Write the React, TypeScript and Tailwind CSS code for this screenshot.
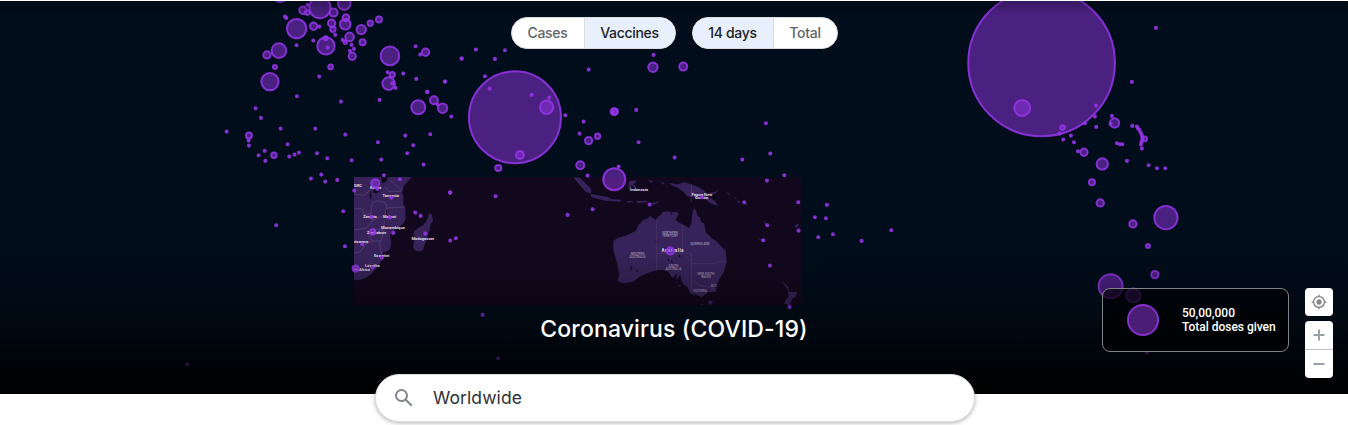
type Bubble = [x: number, y: number, r?: number];
type Region = { x: number; y: number; bubbles: Bubble[] };

// Bubble coordinates are stored per region in thirds of a pixel, relative to the region origin.
const UNIT = 3;

const regions: Region[] = [
  {
    x: 170,
    y: 0,
    bubbles: [
      [330, -20, 28], [398, 30, 14], [412, 14], [411, 37, 10], [449, 22, 35], [522, 10, 22], [490, 37, 15],
      [379, 85, 32], [344, 49], [348, 53], [430, 78, 14], [447, 79], [484, 69, 14], [488, 87, 11], [495, 104],
      [525, 72, 19], [527, 52, 13], [573, 88, 17], [600, 69, 11], [626, 58, 12], [538, 110, 16], [577, 126, 12],
      [525, 126, 8], [517, 119], [544, 134], [551, 146], [539, 152], [546, 168, 14], [467, 137, 29], [466, 114, 9],
      [472, 142], [429, 121], [379, 135], [326, 151, 25], [290, 164, 14], [314, 200, 9], [481, 200, 10], [447, 229],
      [299, 244, 29], [380, 288], [659, 167, 31], [766, 156, 14], [750, 163], [736, 138], [874, 175], [652, 216],
      [666, 223, 11], [699, 220], [655, 250, 22], [667, 249, 7], [676, 263], [738, 236], [824, 244], [771, 275],
    ],
  },
  {
    x: 210,
    y: 90,
    bubbles: [
      [136, 54], [152, 83], [49, 124], [211, 115], [315, 115], [392, 34], [508, 29], [405, 133], [116, 136, 12],
      [115, 151], [116, 166], [232, 162], [163, 182], [145, 195], [165, 212], [191, 195, 11], [237, 199], [253, 193],
      [266, 187], [320, 189], [351, 204], [424, 210], [503, 156], [513, 208], [585, 136], [660, 132], [609, 165],
      [591, 189], [640, 223], [333, 253], [302, 265], [345, 274], [381, 269], [521, 255], [569, 267], [624, 51, 24],
      [671, 30, 15], [697, 54, 17], [682, 43], [651, 5], [723, 79],
    ],
  },
  {
    x: 440,
    y: 40,
    bubbles: [
      [224, 231, 141], [107, 28], [64, 55], [164, 56], [194, 30], [134, 108], [148, 145], [274, 164], [327, 172],
      [319, 201, 23], [239, 344, 15], [174, 383, 12], [375, 225], [430, 244], [418, 280], [445, 88], [640, 44],
      [638, 81, 17], [729, 79, 15], [521, 214, 13], [524, 214, 12], [517, 215], [588, 209], [445, 301, 14],
      [472, 288, 11], [595, 306], [703, 352], [420, 375, 15], [442, 406], [535, 379], [522, 417, 36], [14, 124],
      [29, 457], [166, 468],
    ],
  },
  {
    x: 345,
    y: 170,
    bubbles: [
      [90, 39, 15], [96, 56], [27, 61], [138, 82], [78, 140], [134, 142], [82, 185, 11], [144, 188], [51, 222],
      [110, 262], [31, 295, 12], [82, 292], [210, 127], [226, 137], [240, 190], [315, 67], [315, 211], [332, 204],
      [-1, 228], [-6, 123], [-207, 165], [-474, 583], [412, 434], [459, 564],
    ],
  },
  {
    x: 560,
    y: 170,
    bubbles: [
      [22, 134], [97, 117], [268, 103], [425, 81], [330, 242, 14], [552, 96], [620, 31], [672, 15], [714, 96],
      [621, 165], [609, 210], [715, 181], [629, 286], [688, 410],
    ],
  },
  {
    x: 670,
    y: 100,
    bubbles: [
      [287, 69], [300, 160], [216, 178], [470, 314], [434, 351], [467, 354], [488, 402], [444, 411], [574, 422],
      [663, 390],
    ],
  },
  {
    x: 950,
    y: 0,
    bubbles: [
      [274, 188, 223], [216, 323, 27], [617, 83], [545, 245], [437, 316], [434, 349], [404, 369], [438, 380],
      [337, 382, 10], [328, 400], [339, 418], [362, 406], [371, 426], [485, 347], [493, 368, 17], [481, 371],
      [546, 377],
    ],
  },
  {
    x: 1030,
    y: 90,
    bubbles: [
      [320, 109], [323, 114], [327, 119], [331, 126], [334, 133], [336, 140], [336, 147], [334, 155], [332, 163],
      [343, 146, 10], [335, 175], [260, 159], [269, 162], [276, 162], [143, 183], [161, 186, 14], [216, 221, 20],
      [290, 212], [185, 276, 12], [210, 338, 14], [308, 401, 14], [355, 225], [380, 234], [405, 234], [407, 382, 38],
    ],
  },
  {
    x: 1080,
    y: 230,
    bubbles: [[203, 47, 9], [224, 133, 14], [91, 168, 39], [159, 196, 24], [200, 366]],
  },
];

const labels = [
  { x: 354, y: 186.5, text: "DRC" },
  { x: 370, y: 188.5, text: "Kenya" },
  { x: 382.5, y: 197, text: "Tanzania" },
  { x: 363, y: 217.5, text: "Zambia" },
  { x: 383, y: 217.5, text: "Malawi" },
  { x: 381, y: 228.5, text: "Mozambique" },
  { x: 367, y: 233.5, text: "Zimbabwe" },
  { x: 350, y: 243.3, text: "Botswana" },
  { x: 374, y: 257, text: "Eswatini" },
  { x: 365, y: 267, text: "Lesotho" },
  { x: 354, y: 271, text: "th Africa" },
  { x: 411.5, y: 240, text: "Madagascar" },
  { x: 630, y: 191, text: "Indonesia" },
  { x: 691.5, y: 195.7, text: "Papua New" },
  { x: 695, y: 199, text: "Guinea" },
];

const states = [
  { x: 670, y: 234, text: "NORTHERN" },
  { x: 670, y: 237, text: "TERRITORY" },
  { x: 700, y: 245, text: "QUEENSLAND" },
  { x: 637.5, y: 255, text: "WESTERN" },
  { x: 637.5, y: 258, text: "AUSTRALIA" },
  { x: 673.5, y: 266.5, text: "SOUTH" },
  { x: 673.5, y: 269.5, text: "AUSTRALIA" },
  { x: 706, y: 275, text: "NEW SOUTH" },
  { x: 706, y: 278, text: "WALES" },
  { x: 700, y: 291.5, text: "VICTORIA" },
  { x: 713.5, y: 287, text: "ACT" },
];

function BaseMap() {
  return (
    <g>
      <rect x="354" y="177" width="448" height="128" fill="#12081d" />
      <g transform="translate(345 170) scale(.33333)">
        <path
          fill="#37235a"
          d="M27 21H200L188 35 177 47 171 67 176 82 174 101 181 115 182 146 174 162 157 174 140 187 135 197 139 220 134 239 113 249 113 267 98 290 78 313 60 325 40 331 27 329ZM254 126 261 137 264 153 258 159 254 179 243 213 234 239 225 244 211 242 204 230 208 213 206 185 219 174 234 166 246 151Z"
        />
        <path fill="#12081d" d="m89 55 13-4 4 10-12 10-10-4Zm-13 4 4 20-2 11-5-14Zm46 57 4 5 1 22-3-10ZM108 22l20 0-2 12-14 6Z" />
        <path
          fill="none"
          stroke="#5b4779"
          strokeWidth="2"
          d="M27 116 52 117 58 134 77 130 82 99 98 92 120 97 125 106 120 134M135 30l34 30M120 52l10 12 41 0M125 114l55-3M58 134l26 16 29-12M84 150l-20 24-37 6M84 176l29 5 6-28M64 183l17 30 27 0 9-33M27 250l18-5 17-22 20-10M103 213l4 28 5 14M68 289l10-12 10 8-8 11ZM27 72l31 4 20-18"
        />
      </g>
      <g transform="translate(560 170) scale(.33333)">
        <path
          fill="#37235a"
          d="M160 213 172 205 200 196 228 182 236 165 250 150 262 146 270 138 288 150 293 140 303 134 307 127 325 122 330 127 350 126 356 131 347 150 360 160 372 165 388 174 394 160 398 125 404 114 409 125 412 137 420 143 424 157 432 160 438 188 455 205 470 214 480 226 497 243 500 275 492 305 478 327 470 348 468 366 445 367 425 381 410 375 392 372 382 350 371 345 364 330 361 314 346 333 353 310 337 324 325 305 312 300 290 301 265 308 238 320 220 335 190 340 172 332 178 315 170 275 160 240Z"
        />
        <path
          fill="#37235a"
          d="m40 22 20 2 34 32-1 14-14-3-17-18Zm51 49 29 6 23 4 12 6 28 3-1 5-45-3-43-10Zm116-37 15-3 8 5-11 6 12 9-7 3-9-8-4 14-6-5Zm120 5 27 4 19-7 22 8 19 6 19 12 6 16 26 15 11 15-25-8-26-22-18 4-23-2-13-14-17-12-16-7Zm116 30 25-4 8-8-8 13-21 6ZM197 93l26 1-17 4Zm31 0 30-1 10 4-34 3Zm42 9 30-10-18 13ZM496 62l15 12-3 2Zm22 15 13 10-3 1Zm13 14 12 5-8 4Zm24 5 10 10-8-2ZM589 199l19 13 4 5-5-1ZM666 333l17 15 5 18 23 0-2 12-12 9-9 19-15-5 4-12 9-9-2-19ZM703 166l15-5-7 14ZM609 150l8 8 1 10ZM263 29l20 6-11 3Zm41 6 10 5-7 4ZM423 401l7 3-6 2Zm22-9 14 1-6 11-7-3ZM354 344l10 2-6 4Z"
        />
        <path fill="#12081d" d="m211 286 5 8-4 10ZM285 215l7-3-2 7ZM355 250l7 10-5 3Zm-30 15 3 7-4 2Zm9 4 5 9-5-2ZM333 125l5 10-4-1Zm-104 172 6 10-7-4Z" />
        <path fill="none" stroke="#56436f" strokeWidth="1.5" d="M290 149V301M290 250H394M368 165V250M394 250V362M394 280H467l12-5 18 1M394 331l17 8 9 9 18 1 27 10M394 42v54" />
      </g>
      <g fontFamily="Roboto, sans-serif" fontSize="4.1" fontWeight="700" fill="#e0dae6">
        {labels.map((l) => (
          <text key={l.text} x={l.x} y={l.y} clipPath="url(#tiles)">{l.text}</text>
        ))}
        <text x="661.5" y="252.3" fontSize="4.5" textLength="22">Australia</text>
      </g>
      <g fontFamily="Roboto, sans-serif" fontSize="3" fontWeight="500" fill="#a497b4" textAnchor="middle">
        {states.map((s) => (
          <text key={`${s.text}${s.y}`} x={s.x} y={s.y}>{s.text}</text>
        ))}
      </g>
    </g>
  );
}

function WorldMap() {
  return (
    <svg className="absolute inset-0" width="1348" height="393" viewBox="0 1 1348 393" aria-hidden="true">
      <defs>
        <clipPath id="tiles">
          <rect x="354" y="177" width="448" height="128" />
        </clipPath>
        <linearGradient id="fade" x1="0" y1="0" x2="0" y2="1">
          <stop offset="0" stopColor="#000" stopOpacity="0" />
          <stop offset=".45" stopColor="#000" stopOpacity=".3" />
          <stop offset=".75" stopColor="#000" stopOpacity=".66" />
          <stop offset="1" stopColor="#000" stopOpacity="1" />
        </linearGradient>
        <linearGradient id="top" x1="0" y1="0" x2="0" y2="1">
          <stop offset="0" stopColor="#000" stopOpacity=".25" />
          <stop offset="1" stopColor="#000" stopOpacity="0" />
        </linearGradient>
      </defs>
      <rect width="1348" height="394" fill="#010d1b" />
      <BaseMap />
      <g fill="#9334e6" fillOpacity=".5" stroke="#9334e6" strokeOpacity=".88" strokeWidth="2">
        {regions.flatMap((region) =>
          region.bubbles.map(([x, y, r = 6.2]) => (
            <circle
              key={`${region.x}-${x}-${y}`}
              cx={region.x + (x + 0.8) / UNIT}
              cy={region.y + (y + 0.8) / UNIT}
              r={r / UNIT - 1}
            />
          )),
        )}
      </g>
      <rect y="250" width="1348" height="144" fill="url(#fade)" />
      <rect y="1" width="1348" height="14" fill="url(#top)" />
    </svg>
  );
}

type ToggleProps = { options: { label: string; width: string }[]; active: number };

function Toggle({ options, active }: ToggleProps) {
  return (
    <div className="flex h-8 overflow-hidden rounded-full border border-[#dadce0] bg-white text-[14px]">
      {options.map((option, i) => (
        <button
          key={option.label}
          className={`${option.width} ${i > 0 ? "border-l border-[#dadce0]" : ""} ${
            i === active ? "bg-[#e8f0fe] text-[#202124]" : "text-[#5f6368]"
          } pb-px font-medium tracking-[-0.3px]`}
        >
          {option.label}
        </button>
      ))}
    </div>
  );
}

function Legend() {
  return (
    <div className="flex h-16 w-[187px] items-center rounded-lg border border-[#808386] bg-black/65 pl-6 font-[Roboto,sans-serif] text-[12px] leading-[14px] font-medium text-white">
      <svg width="32" height="32" viewBox="0 0 32 32" className="shrink-0">
        <circle cx="16" cy="16" r="15" fill="#4b1e76" stroke="#8430ce" strokeWidth="2" />
      </svg>
      <div className="ml-[23px] tracking-[-0.02px] whitespace-nowrap">
        <div>50,00,000</div>
        <div>Total doses given</div>
      </div>
    </div>
  );
}

function MapControls() {
  return (
    <div className="flex w-7 flex-col gap-[5px]">
      <button className="flex h-7 items-center justify-center rounded bg-white" aria-label="My location">
        <svg width="16" height="16" viewBox="0 0 24 24" fill="#80868b">
          <path d="M12 8c-2.210 0-4 1.790-4 4s1.790 4 4 4 4-1.790 4-4-1.790-4-4-4zm8.940 3A8.994 8.994 0 0 0 13 3.060V1h-2v2.060A8.994 8.994 0 0 0 3.060 11H1v2h2.060A8.994 8.994 0 0 0 11 20.940V23h2v-2.060A8.994 8.994 0 0 0 20.940 13H23v-2h-2.060zM12 19c-3.870 0-7-3.130-7-7s3.130-7 7-7 7 3.130 7 7-3.130 7-7 7z" />
        </svg>
      </button>
      <div className="overflow-hidden rounded bg-white">
        <button className="flex h-[29px] w-full items-center justify-center border-b border-[#bdc1c6]" aria-label="Zoom in">
          <svg width="12" height="12" viewBox="0 0 12 12" stroke="#9aa0a6" strokeWidth="2"><path d="M.5 6h11M6 .5v11" /></svg>
        </button>
        <button className="flex h-7 w-full items-center justify-center" aria-label="Zoom out">
          <svg width="12" height="12" viewBox="0 0 12 12" stroke="#9aa0a6" strokeWidth="2"><path d="M.5 6h11" /></svg>
        </button>
      </div>
    </div>
  );
}

export default function App() {
  return (
    <main className="h-[425px] w-[1348px] overflow-hidden bg-white pt-px font-[Inter,sans-serif]">
      <header className="relative h-[393px]">
        <WorldMap />
        <div className="relative flex justify-center gap-4 pt-4">
          <Toggle active={1} options={[{ label: "Cases", width: "w-[72px]" }, { label: "Vaccines", width: "w-[91px]" }]} />
          <Toggle active={0} options={[{ label: "14 days", width: "w-[80px]" }, { label: "Total", width: "w-[64px]" }]} />
        </div>
        <div className="absolute right-[15px] bottom-4 flex items-start gap-4">
          <Legend />
          <MapControls />
        </div>
        <h1 className="absolute inset-x-0 top-[312px] text-center text-[23px] leading-8 font-medium tracking-[0.14px] text-white">
          Coronavirus (COVID-19)
        </h1>
      </header>
      <div className="relative mx-auto -mt-5 flex h-12 w-[600px] translate-x-px items-center rounded-full border border-[#dadce0] bg-white pl-4 shadow-[0_1px_4px_rgba(60,64,67,0.4)]">
        <svg width="24" height="24" viewBox="0 0 24 24" fill="#80868b">
          <path d="M20.490 19l-5.730-5.730C15.530 12.200 16 10.910 16 9.500A6.500 6.500 0 1 0 9.500 16c1.410 0 2.700-.470 3.770-1.240L19 20.490 20.490 19zM5 9.500C5 7.010 7.010 5 9.500 5S14 7.010 14 9.500 11.990 14 9.500 14 5 11.990 5 9.500z" />
        </svg>
        <span className="ml-[17px] text-[17.500px] tracking-[0.1px] text-[#303134]">Worldwide</span>
      </div>
    </main>
  );
}
